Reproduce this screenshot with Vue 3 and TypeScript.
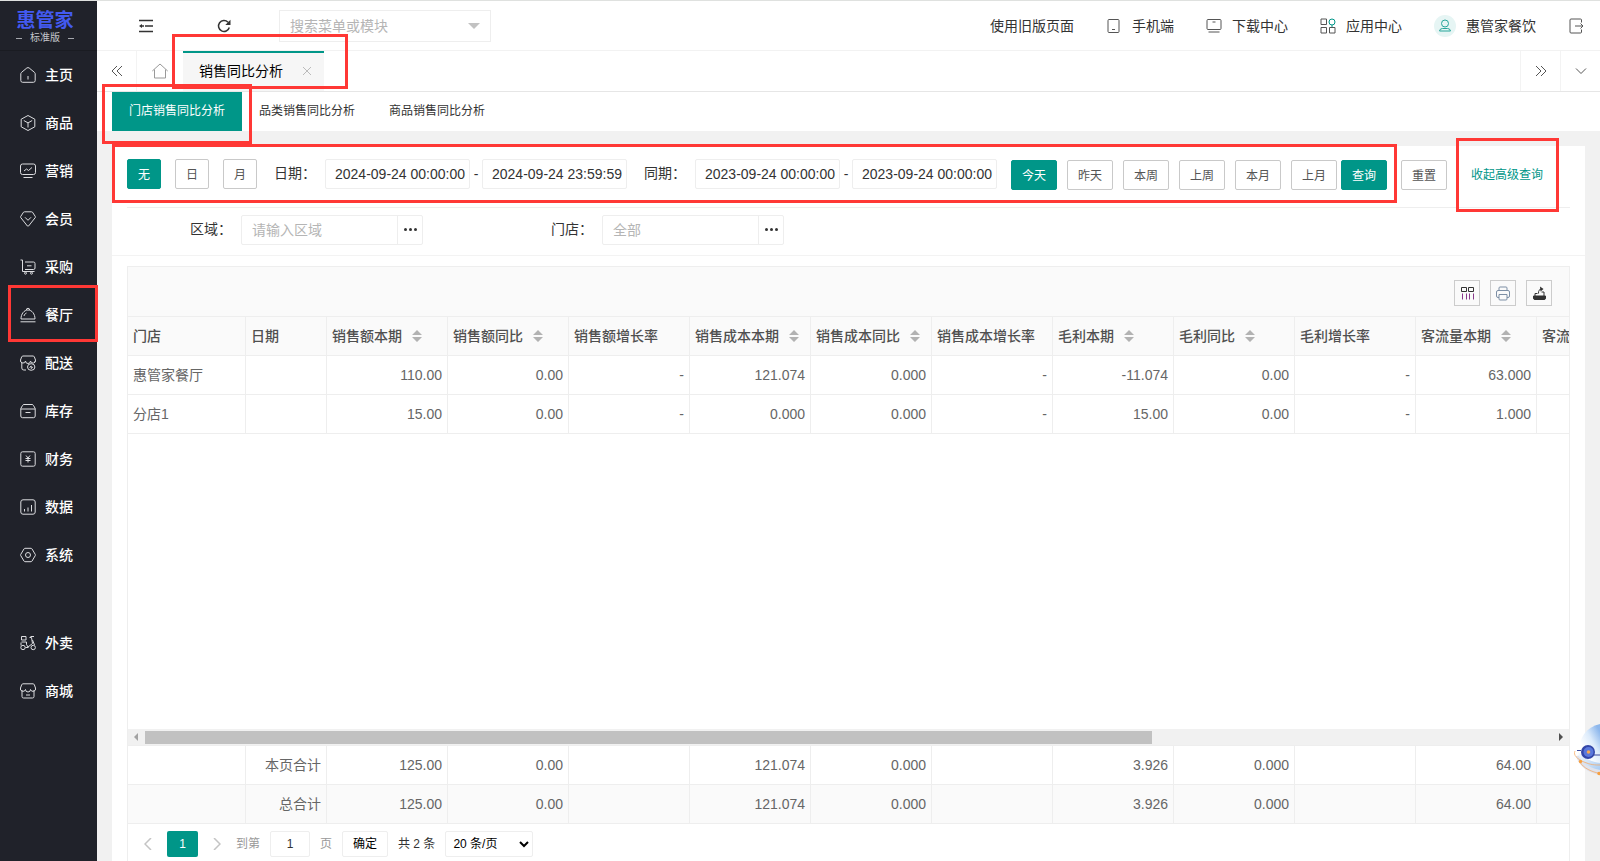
<script setup lang="ts">
import { ref } from 'vue'

interface MenuItem {
  label: string
  icon: string
  marked?: boolean
}

interface Column {
  label: string
  sortable?: boolean
}

const shop = 'M2 7v6.500a1.500 1.500 0 0 0 1.500 1.500h9a1.500 1.500 0 0 0 1.500-1.500V7M3 .800h10a1.500 1.500 0 0 1 1.300.900L15.500 5a2.500 2.500 0 0 1-5 1.500 2.500 2.500 0 0 1-5 0A2.500 2.500 0 0 1 .500 5l1.200-3.300A1.500 1.500 0 0 1 3 .800zM6 12h4'

const menu: MenuItem[] = [
  { label: '主页', icon: 'M.800 6.800Q.800 6 1.500 5.400L6.800 1Q8 .200 9.200 1l5.300 4.400q.700.600.700 1.400V13.500a1.800 1.800 0 0 1-1.800 1.800H2.600A1.800 1.800 0 0 1 .800 13.500zM8 9v3.500' },
  { label: '商品', icon: 'M8 .500 14.800 4.200v7.600L8 15.500 1.200 11.800V4.200zM3.800 5.500 8 7.900l4.200-2.400M8 7.900v4.600' },
  { label: '营销', icon: 'M2.500 1h11a2 2 0 0 1 2 2v6.500a2 2 0 0 1-2 2h-11a2 2 0 0 1-2-2V3a2 2 0 0 1 2-2zM4 8l2.500-2 2 1.500L12 4.500M3.500 14.500h9' },
  { label: '会员', icon: 'M3.500 1.200Q4 .800 4.500.800h7q.500 0 1 .400L15.300 5.500q.200.500 0 1L8.600 15q-.600.500-1.200 0L.700 6.500q-.200-.500 0-1zM5 6.300 8 9.300l3-3' },
  { label: '采购', icon: 'M.500 1H2.500V12.500h12M5 3h8.500a1.500 1.500 0 0 1 1.500 1.500V9a1.500 1.500 0 0 1-1.500 1.500H5M7 6.800h4.500M4.500 14.200a1 1 0 1 0 2 0 1 1 0 1 0-2 0M10.500 14.200a1 1 0 1 0 2 0 1 1 0 1 0-2 0' },
  { label: '餐厅', icon: 'M1 12C1 7 4 3 8 3s7 4 7 9zM6.300 3a1.700 1.700 0 0 1 3.400 0M4 9C4.300 7.500 5.300 6.500 6.500 6M.500 14.800h15', marked: true },
  { label: '配送', icon: 'M1.800 7v6a2 2 0 0 0 2 2H6M14.500 8V6.500M3 1h10a1.500 1.500 0 0 1 1.300.800L15.500 5a2.500 2.500 0 0 1-5 1 2.500 2.500 0 0 1-5 0A2.500 2.500 0 0 1 .500 5l1.200-3.200A1.500 1.500 0 0 1 3 1zM7.500 12a3.700 3.300 0 1 0 7.400 0 3.700 3.300 0 1 0-7.400 0M9.500 12.500l1.700-1.500v2.500l1.700-1.500' },
  { label: '库存', icon: 'M.800 5.500 2.500 2.500Q3 1.500 4 1.500h8q1 0 1.500 1l1.700 3V13a1.700 1.700 0 0 1-1.700 1.700h-11A1.700 1.700 0 0 1 .800 13zM.800 6h14.400M5.500 9.500h5' },
  { label: '财务', icon: 'M2.500.800h11A1.700 1.700 0 0 1 15.200 2.500v11a1.700 1.700 0 0 1-1.700 1.700h-11A1.700 1.700 0 0 1 .800 13.500v-11A1.700 1.700 0 0 1 2.500.800zM6 4.500l2 2.500 2-2.500M5.500 7.500h5M5.500 9.500h5M8 7v4.500' },
  { label: '数据', icon: 'M3 .800h10A2.200 2.200 0 0 1 15.200 3v10a2.200 2.200 0 0 1-2.200 2.200H3A2.200 2.200 0 0 1 .800 13V3A2.200 2.200 0 0 1 3 .800zM4.500 10v2.500M8 8.500v4M11.500 6v6.500' },
  { label: '系统', icon: 'M5 1.300h6q.600 0 1 .600L15.300 7.500q.200.500 0 1L12 14.100q-.400.600-1 .600H5q-.600 0-1-.600L.700 8.500q-.200-.500 0-1L4 1.900q.400-.600 1-.600zM5.500 8a2.500 2.500 0 1 0 5 0 2.500 2.500 0 1 0-5 0' },
]

const extraMenu: MenuItem[] = [
  { label: '外卖', icon: 'M1.500 1.500h4.500v3.500H1.500zM1.500 7h5v2.500M6.500 9.500 8 12l4.500-3.500-1-6H9.500M10.500 1.500h3.500M12.500 5 14.500 10M1 7.500v3M.800 12.500a2.200 2.200 0 1 0 4.400 0 2.200 2.200 0 1 0-4.400 0M11 12.500a2.200 2.200 0 1 0 4.400 0 2.200 2.200 0 1 0-4.400 0M5.500 12.500h3' },
  { label: '商城', icon: shop },
]

const topLinks = [
  { label: '手机端', icon: 'M3 1.500h9a1 1 0 0 1 1 1v11a1 1 0 0 1-1 1H3a1 1 0 0 1-1-1v-11a1 1 0 0 1 1-1zM6 11.500h3' },
  { label: '下载中心', icon: 'M2 1.500h12a1 1 0 0 1 1 1v8a1 1 0 0 1-1 1H2a1 1 0 0 1-1-1v-8a1 1 0 0 1 1-1zM6.500 4h3M2.500 14h11' },
]

const pageTabs = ['门店销售同比分析', '品类销售同比分析', '商品销售同比分析']
const activePage = ref(0)

const groupings = ['无', '日', '月']
const grouping = ref('无')
const ranges = ['今天', '昨天', '本周', '上周', '本月', '上月']
const range = ref('今天')

const currentFrom = ref('2024-09-24 00:00:00')
const currentTo = ref('2024-09-24 23:59:59')
const previousFrom = ref('2023-09-24 00:00:00')
const previousTo = ref('2023-09-24 00:00:00')
const pageNumber = ref('1')

const columns: Column[] = [
  { label: '门店' },
  { label: '日期' },
  { label: '销售额本期', sortable: true },
  { label: '销售额同比', sortable: true },
  { label: '销售额增长率' },
  { label: '销售成本本期', sortable: true },
  { label: '销售成本同比', sortable: true },
  { label: '销售成本增长率' },
  { label: '毛利本期', sortable: true },
  { label: '毛利同比', sortable: true },
  { label: '毛利增长率' },
  { label: '客流量本期', sortable: true },
  { label: '客流量同比', sortable: true },
]

const rows: string[][] = [
  ['惠管家餐厅', '', '110.00', '0.00', '-', '121.074', '0.000', '-', '-11.074', '0.00', '-', '63.000', ''],
  ['分店1', '', '15.00', '0.00', '-', '0.000', '0.000', '-', '15.00', '0.00', '-', '1.000', ''],
]

const totals: string[][] = [
  ['', '本页合计', '125.00', '0.00', '', '121.074', '0.000', '', '3.926', '0.000', '', '64.00', ''],
  ['', '总合计', '125.00', '0.00', '', '121.074', '0.000', '', '3.926', '0.000', '', '64.00', ''],
]
</script>

<template>
  <div class="app">
    <aside class="side">
      <div class="logo">
        <strong>惠管家</strong>
        <span class="edition">标准版</span>
      </div>
      <nav class="menu">
        <a v-for="item in menu" :key="item.label" href="#" class="menu-item" :class="{ marked: item.marked }">
          <svg class="line-icon" viewBox="0 0 16 16"><path :d="item.icon" /></svg>
          <span>{{ item.label }}</span>
        </a>
      </nav>
      <nav class="menu extra">
        <a v-for="item in extraMenu" :key="item.label" href="#" class="menu-item">
          <svg class="line-icon" viewBox="0 0 16 16"><path :d="item.icon" /></svg>
          <span>{{ item.label }}</span>
        </a>
      </nav>
    </aside>

    <div class="main">
      <header class="top">
        <div class="top-left">
          <button class="icon-btn" aria-label="折叠菜单">
            <svg class="dark-icon" viewBox="0 0 14 14"><path d="M0 1.500h14M6 7h8M0 12.500h14" /><path class="solid" d="M0 7l3-2v4z" /><path d="M2 7h3" /></svg>
          </button>
          <button class="icon-btn" aria-label="刷新">
            <svg class="dark-icon" viewBox="0 0 14 14"><path d="M12.300 8.500A5.500 5.500 0 1 1 11 3.200" /><path class="solid" d="M13.500.800V6H8.300z" /></svg>
          </button>
          <div class="search">
            <input type="text" placeholder="搜索菜单或模块" aria-label="搜索菜单或模块" />
            <svg viewBox="0 0 12 6"><path d="M0 0h12L6 6z" /></svg>
          </div>
        </div>
        <div class="top-right">
          <a href="#">使用旧版页面</a>
          <a v-for="link in topLinks" :key="link.label" href="#">
            <svg class="thin-icon" viewBox="0 0 16 16"><path :d="link.icon" /></svg>{{ link.label }}
          </a>
          <a href="#">
            <svg class="thin-icon" viewBox="0 0 16 16">
              <path d="M1 1h5.500v5.500H1zM1 9.500h5.500V15H1zM9.500 9.500H15V15H9.500z" />
              <path class="teal" d="M9 4a3 3 0 1 0 6 0 3 3 0 1 0-6 0M12 7v2" />
            </svg>应用中心
          </a>
          <a href="#">
            <svg class="avatar" viewBox="0 0 22 22"><circle class="halo" cx="11" cy="11" r="11" /><circle cx="11" cy="8.500" r="3.500" /><path d="M5.500 16a3 3 0 0 1 3-2.500h5a3 3 0 0 1 3 2.500z" /></svg>惠管家餐饮
          </a>
          <a href="#" aria-label="退出">
            <svg class="thin-icon" viewBox="0 0 16 16"><path d="M13.500 4.500V2a1 1 0 0 0-1-1H3a1 1 0 0 0-1 1v12a1 1 0 0 0 1 1h9.500a1 1 0 0 0 1-1v-2.500M7 8h8M12.500 5.500 15 8l-2.500 2.500" /></svg>
          </a>
        </div>
      </header>

      <div class="tabs">
        <button class="tab-ctl" aria-label="向左">
          <svg class="thin-icon" viewBox="0 0 16 16"><path d="M8 3 3 8l5 5M13 3 8 8l5 5" /></svg>
        </button>
        <button class="tab-home" aria-label="首页">
          <svg class="pale-icon" viewBox="0 0 16 16"><path d="M.300 8 8 1l7.700 7M2.500 6.500v8.500h11V6.500" /></svg>
        </button>
        <div class="tab-active">
          <a href="#">销售同比分析</a>
          <button aria-label="关闭"><svg viewBox="0 0 8 8"><path d="M0 0l8 8M8 0 0 8" /></svg></button>
          <i class="mark mark-tab"></i>
        </div>
        <span class="grow"></span>
        <button class="tab-ctl end" aria-label="向右">
          <svg class="thin-icon" viewBox="0 0 16 16"><path d="M3 3 8 8l-5 5M8 3 13 8l-5 5" /></svg>
        </button>
        <button class="tab-ctl end" aria-label="更多">
          <svg class="thin-icon" viewBox="0 0 16 16"><path d="M3 5.500 8 10.500l5-5" /></svg>
        </button>
      </div>

      <div class="pages">
        <button v-for="(tab, i) in pageTabs" :key="tab" class="page-tab" :class="{ on: i === activePage }" @click="activePage = i">
          {{ tab }}
        </button>
        <i class="mark mark-page"></i>
      </div>

      <section class="card">
        <form class="filters" @submit.prevent>
          <div class="line primary">
            <div class="group wide">
              <button v-for="g in groupings" :key="g" type="button" class="btn small" :class="{ on: g === grouping }" @click="grouping = g">{{ g }}</button>
            </div>
            <label for="current-from" class="cap first">日期：</label>
            <input id="current-from" v-model="currentFrom" class="date" type="text" />
            <span class="dash">-</span>
            <input v-model="currentTo" class="date" type="text" aria-label="结束日期" />
            <label for="previous-from" class="cap">同期：</label>
            <input id="previous-from" v-model="previousFrom" class="date" type="text" />
            <span class="dash">-</span>
            <input v-model="previousTo" class="date" type="text" aria-label="同期结束日期" />
            <div class="actions">
              <div class="group">
                <button v-for="r in ranges" :key="r" type="button" class="btn" :class="{ on: r === range }" @click="range = r">{{ r }}</button>
              </div>
              <button type="submit" class="btn on query">查询</button>
              <button type="reset" class="btn reset">重置</button>
              <a href="#" class="collapse">收起高级查询<i class="mark mark-link"></i></a>
            </div>
            <i class="mark mark-filters"></i>
          </div>
          <div class="line advanced">
            <div class="field">
              <label for="area">区域：</label>
              <div class="picker"><input id="area" type="text" placeholder="请输入区域" /><button type="button" aria-label="选择区域"><b></b><b></b><b></b></button></div>
            </div>
            <div class="field">
              <label for="store">门店：</label>
              <div class="picker"><input id="store" type="text" placeholder="全部" /><button type="button" aria-label="选择门店"><b></b><b></b><b></b></button></div>
            </div>
          </div>
        </form>

        <div class="grid">
          <div class="tools">
            <button aria-label="筛选列">
              <svg viewBox="0 0 16 16"><path d="M2.500 2.500h5v4h-5zM9.500 2.500h5v4h-5z" stroke="#333" /><path d="M3.500 8.500v6M7.500 8.500v6M10.500 8.500v6M14.500 8.500v6" stroke="#8a3a8c" /></svg>
            </button>
            <button aria-label="打印">
              <svg viewBox="0 0 16 16"><path d="M4 5.500V3a1 1 0 0 1 1-1h6a1 1 0 0 1 1 1v2.500M4 12.500H3A1.500 1.500 0 0 1 1.500 11V7A1.500 1.500 0 0 1 3 5.500h10A1.500 1.500 0 0 1 14.500 7v4a1.500 1.500 0 0 1-1.500 1.500h-1M4 9.500h8V14a1 1 0 0 1-1 1H5a1 1 0 0 1-1-1z" stroke="#7d8fa5" /></svg>
            </button>
            <button aria-label="导出">
              <svg viewBox="0 0 16 16"><path d="M2.500 11h12v2a1.500 1.500 0 0 1-1.500 1.500H4A1.500 1.500 0 0 1 2.500 13z" fill="#333" stroke="#333" /><path d="M4 11V8.500h2.500M13 11V7h-2.500M7.500 8.500C7.500 5.500 8 4.500 10.500 4" stroke="#333" /><path d="M9 1.500 12.500 4 9.500 6.500z" fill="#333" /></svg>
            </button>
          </div>

          <div class="clip">
            <table>
              <colgroup><col v-for="(c, i) in columns" :key="c.label" :class="'col-' + Math.min(i, 2)" /></colgroup>
              <thead>
                <tr>
                  <th v-for="c in columns" :key="c.label" scope="col">
                    <span>{{ c.label }}</span>
                    <svg v-if="c.sortable" class="sort" viewBox="0 0 10 12"><path d="M0 5h10L5 0zM0 7h10l-5 5z" /></svg>
                  </th>
                </tr>
              </thead>
              <tbody>
                <tr v-for="row in rows" :key="row[0]">
                  <td v-for="(cell, i) in row" :key="i" :class="{ num: i > 1 }">{{ cell }}</td>
                </tr>
              </tbody>
            </table>
          </div>

          <div class="scroll">
            <svg viewBox="0 0 4 8"><path d="M4 0v8L0 4z" fill="#a3a3a3" /></svg>
            <div class="track"><div class="thumb"></div></div>
            <svg viewBox="0 0 4 8"><path d="M0 0v8l4-4z" fill="#505050" /></svg>
          </div>

          <div class="totals">
            <table>
              <colgroup><col v-for="(c, i) in columns" :key="c.label" :class="'col-' + Math.min(i, 2)" /></colgroup>
              <tbody>
                <tr v-for="row in totals" :key="row[1]">
                  <td v-for="(cell, i) in row" :key="i" class="num">{{ cell }}</td>
                </tr>
              </tbody>
            </table>
          </div>

          <div class="pager">
            <button class="step" aria-label="上一页"><svg viewBox="0 0 8 12"><path d="M7 0 1 6l6 6" /></svg></button>
            <button class="current">1</button>
            <button class="step" aria-label="下一页"><svg viewBox="0 0 8 12"><path d="M1 0l6 6-6 6" /></svg></button>
            <label for="page-no">到第</label>
            <input id="page-no" v-model="pageNumber" type="text" />
            <span class="unit">页</span>
            <button class="go">确定</button>
            <span class="count">共 2 条</span>
            <select aria-label="每页条数">
              <option>20 条/页</option>
              <option>50 条/页</option>
            </select>
          </div>
        </div>
      </section>
    </div>

    <svg class="robot" viewBox="0 0 28 54" aria-hidden="true">
      <defs>
        <linearGradient id="shell" x1="0.8" y1="0" x2="0.2" y2="0.6">
          <stop offset="0" stop-color="#8db7ec" />
          <stop offset="0.5" stop-color="#dcebfb" />
          <stop offset="1" stop-color="#ffffff" />
        </linearGradient>
        <linearGradient id="base" x1="0" y1="0" x2="1" y2="1">
          <stop offset="0" stop-color="#ffffff" />
          <stop offset="1" stop-color="#a9ccf3" />
        </linearGradient>
      </defs>
      <path d="M4 34C7 44 16 51 28 53V30z" fill="#dfe3ee" />
      <path d="M6 30c1 9 10 16 22 18V26z" fill="url(#base)" />
      <path d="M28 2C14 5 7 16 6.500 30 12 36 20 40 28 41z" fill="url(#shell)" />
      <path d="M5 28.500h4M22 33h6" stroke="#3c4a9c" fill="none" />
      <circle cx="16" cy="30" r="7" fill="#3346a8" />
      <circle cx="16.500" cy="30" r="5" fill="#5a78dc" />
      <circle cx="16.500" cy="30" r="1.800" fill="#f7a752" />
      <path d="M3 29c-2 4 2 8 9 11s11 3 16 3M8 40c3 6 12 10 20 11.500" stroke="#f7a55a" stroke-width=".700" fill="none" />
      <circle cx="8.500" cy="39.500" r="1.700" fill="#f7a040" />
      <circle cx="27" cy="51.500" r="1.700" fill="#f7a040" />
    </svg>
  </div>
</template>

<style>
html,
body {
  margin: 0;
}
</style>

<style scoped>
.app {
  display: flex;
  height: 100vh;
  box-sizing: border-box;
  border-top: 1px solid #dfe1df;
  overflow: hidden;
  position: relative;
  background: #f1f1f1;
  color: #333;
  font: 14px/20px "Liberation Sans", "Noto Sans CJK SC", sans-serif;
}
.app *,
.app *::before {
  box-sizing: border-box;
}
a {
  color: inherit;
  text-decoration: none;
}
button,
input,
select {
  font: inherit;
  color: inherit;
  margin: 0;
  padding: 0;
  border: 0;
  border-radius: 0;
  background: none;
  outline: 0;
}
input::placeholder {
  color: #b5b5b5;
  opacity: 1;
}
svg {
  display: block;
  flex: none;
}
.mark {
  position: absolute;
  border: 3px solid #ff3835;
  z-index: 5;
  pointer-events: none;
}

/* sidebar */
.side {
  flex: none;
  width: 97px;
  background: #20222a;
  color: #fff;
}
.logo {
  height: 50px;
  padding: 9px 7px 0 0;
  display: flex;
  flex-direction: column;
  align-items: center;
  border-bottom: 1px solid #1a1c22;
}
.logo strong {
  font-size: 19px;
  line-height: 22px;
  color: #435af0;
}
.edition {
  display: flex;
  align-items: center;
  gap: 8px;
  font-size: 10px;
  line-height: 12px;
  color: #c4c6cb;
}
.edition::before,
.edition::after {
  content: "";
  width: 6px;
  height: 1px;
  background: #a5a7ad;
}
.extra {
  margin-top: 40px;
}
.menu-item {
  position: relative;
  display: flex;
  align-items: center;
  gap: 9px;
  height: 48px;
  padding-left: 20px;
  font-weight: 500;
}
.menu-item.marked::after {
  content: "";
  position: absolute;
  inset: -6px -1px -3px 8px;
  border: 3px solid #ff3835;
  z-index: 5;
}
.line-icon {
  width: 16px;
  height: 16px;
  fill: none;
  stroke: #dcdde0;
  overflow: visible;
}

/* header */
.main {
  flex: 1;
  min-width: 0;
  display: flex;
  flex-direction: column;
}
.top {
  flex: none;
  height: 50px;
  display: flex;
  justify-content: space-between;
  background: #fff;
  border-bottom: 1px solid #f2f2f2;
}
.top-left,
.top-right {
  display: flex;
  align-items: center;
}
.icon-btn {
  width: 48px;
  height: 49px;
  display: grid;
  place-items: center;
}
.top-left {
  padding-left: 25px;
}
.icon-btn + .icon-btn {
  margin-left: 30px;
}
.dark-icon {
  width: 14px;
  height: 14px;
  fill: none;
  stroke: #333;
  stroke-width: 1.500;
}
.solid {
  fill: #333;
  stroke: none;
}
.search {
  display: flex;
  align-items: center;
  width: 212px;
  height: 32px;
  margin-left: 31px;
  padding: 0 10px;
  border: 1px solid #eee;
}
.search input {
  flex: 1;
  min-width: 0;
}
.search svg {
  width: 12px;
  height: 6px;
  fill: #c2c2c2;
}
.top-right {
  gap: 32px;
  padding-right: 16px;
}
.top-right a {
  display: flex;
  align-items: center;
  gap: 10px;
}
.thin-icon,
.pale-icon {
  width: 16px;
  height: 16px;
  fill: none;
  stroke: #555;
}
.pale-icon {
  stroke: #999;
}
.teal {
  stroke: #009688;
}
.avatar {
  width: 22px;
  height: 22px;
  fill: none;
  stroke: #26a69a;
}
.avatar .halo {
  fill: #e6f5f4;
  stroke: none;
}

/* open tabs */
.tabs {
  flex: none;
  display: flex;
  height: 40px;
  background: #fff;
}
.tab-ctl {
  width: 40px;
  display: grid;
  place-items: center;
  border-right: 1px solid #f3f3f3;
}
.tab-ctl.end {
  border-right: 0;
  border-left: 1px solid #f3f3f3;
}
.tab-home {
  width: 46px;
  display: grid;
  place-items: center;
}
.tab-active {
  position: relative;
  display: flex;
  align-items: center;
  justify-content: space-between;
  width: 141px;
  padding: 0 13px 2px 16px;
  background: #f6f6f6;
  border-top: 2px solid #009688;
  color: #000;
}
.tab-active svg {
  width: 8px;
  height: 8px;
  stroke: #bbb;
}
.mark-tab {
  inset: -19px -24px 2px -11px;
}
.grow {
  flex: 1;
}
.pages {
  position: relative;
  flex: none;
  display: flex;
  height: 40px;
  margin: 0 0 15px;
  padding-left: 15px;
  background: #fff;
  border-top: 1px solid #e6e6e6;
}
.page-tab {
  height: 39px;
  padding: 0 17px 2px;
  font-size: 12px;
}
.page-tab.on {
  background: #009688;
  color: #fff;
}
.mark-page {
  left: 5px;
  top: -8px;
  width: 150px;
  height: 60px;
}

/* filters */
.card {
  flex: 1;
  min-height: 0;
  display: flex;
  flex-direction: column;
  margin: 0 15px;
  background: #fff;
}
.filters {
  flex: none;
  border-bottom: 1px solid #f3f3f3;
}
.line {
  display: flex;
  align-items: center;
}
.primary {
  position: relative;
  height: 62px;
  padding: 0 0 6px 15px;
  white-space: nowrap;
}
.primary::before {
  content: "";
  position: absolute;
  left: 15px;
  right: 15px;
  bottom: 0;
  height: 1px;
  background: #eee;
}
.group {
  display: flex;
  gap: 10px;
}
.group.wide {
  gap: 14px;
}
.btn {
  flex: none;
  width: 46px;
  height: 30px;
  padding-top: 1px;
  border: 1px solid #c9c9c9;
  border-radius: 2px;
  font-size: 12px;
  line-height: 26px;
  color: #555;
  background: #fff;
}
.btn.small {
  width: 34px;
}
.btn.on {
  border-color: #009688;
  background: #009688;
  color: #fff;
}
.cap {
  width: 51px;
  margin-left: 17px;
  padding-bottom: 2px;
}
.date {
  flex: none;
  width: 145px;
  height: 30px;
  padding-left: 9px;
  border: 1px solid #eee;
  border-radius: 2px;
}
.dash {
  width: 12px;
  text-align: center;
}
.actions {
  display: flex;
  align-items: center;
  margin-left: 14px;
  padding-top: 2px;
}
.query {
  margin-left: 4px;
}
.reset {
  margin-left: 14px;
}
.collapse {
  position: relative;
  margin-left: 24px;
  font-size: 12px;
  color: #009688;
}
.mark-link {
  inset: -27px -16px -27px -15px;
}
.mark-filters {
  left: 0;
  top: -2px;
  width: 1285px;
  height: 59px;
}
.advanced {
  height: 47px;
  padding: 0 0 4px 78px;
  gap: 128px;
}
.field {
  display: flex;
  align-items: center;
}
.field label {
  width: 51px;
  padding-bottom: 2px;
}
.picker {
  display: flex;
  width: 182px;
  height: 30px;
  border: 1px solid #eee;
  border-radius: 2px;
}
.picker input {
  flex: 1;
  min-width: 0;
  padding-left: 10px;
}
.picker button {
  width: 25px;
  display: flex;
  align-items: center;
  justify-content: center;
  gap: 2px;
  border-left: 1px solid #eee;
}
.picker b {
  width: 3px;
  height: 3px;
  border-radius: 50%;
  background: #333;
}

/* data grid */
.grid {
  flex: 1;
  min-height: 0;
  display: flex;
  flex-direction: column;
  margin: 10px 15px 0;
  border: 1px solid #eee;
  border-bottom: 0;
  color: #666;
}
.tools {
  flex: none;
  height: 50px;
  display: flex;
  justify-content: flex-end;
  align-items: center;
  gap: 10px;
  padding: 2px 17px 0 0;
  background: #fafafa;
  border-bottom: 1px solid #eee;
}
.tools button {
  width: 26px;
  height: 26px;
  display: grid;
  place-items: center;
  border: 1px solid #ccc;
}
.tools svg {
  width: 16px;
  height: 16px;
  fill: none;
}
.clip {
  flex: 1;
  min-height: 0;
  overflow: hidden;
}
.totals {
  flex: none;
  overflow: hidden;
  border-top: 1px solid #eee;
}
table {
  table-layout: fixed;
  width: 1530px;
  border-collapse: separate;
  border-spacing: 0;
}
.col-0 {
  width: 118px;
}
.col-1 {
  width: 81px;
}
.col-2 {
  width: 121px;
}
th,
td {
  height: 39px;
  padding: 0 5px;
  border-right: 1px solid #eee;
  border-bottom: 1px solid #eee;
  text-align: left;
  white-space: nowrap;
  overflow: hidden;
}
th {
  padding-bottom: 2px;
  background: #fafafa;
  font-weight: 500;
  color: #505050;
}
th span {
  display: inline-block;
  vertical-align: middle;
}
.sort {
  display: inline-block;
  vertical-align: middle;
  width: 10px;
  height: 12px;
  margin-left: 10px;
  fill: #b2b2b2;
}
.num {
  text-align: right;
}
.totals tr:last-child td {
  background: #fafafa;
}
.scroll {
  flex: none;
  display: flex;
  align-items: center;
  height: 16px;
  padding: 0 6px;
  gap: 7px;
  background: #f1f1f1;
}
.scroll svg {
  width: 4px;
  height: 8px;
}
.track {
  flex: 1;
}
.thumb {
  width: 71.6%;
  height: 13px;
  background: #c1c1c1;
}

/* pagination */
.pager {
  flex: none;
  display: flex;
  align-items: center;
  height: 37px;
  padding: 3px 0 0 9px;
  font-size: 12px;
}
.pager svg {
  width: 8px;
  height: 12px;
  fill: none;
  stroke: #c4c4c4;
  stroke-width: 1.500;
}
.step {
  width: 22px;
  height: 26px;
  display: grid;
  place-items: center;
}
.current {
  width: 31px;
  height: 26px;
  margin: 0 8px;
  border-radius: 2px;
  background: #009688;
  color: #fff;
}
.pager label {
  margin-left: 8px;
  color: #999;
}
.pager input {
  width: 40px;
  height: 26px;
  margin: 0 10px;
  border: 1px solid #eee;
  border-radius: 2px;
  text-align: center;
  color: #333;
}
.unit {
  color: #999;
}
.go {
  width: 46px;
  height: 26px;
  margin: 0 10px;
  border: 1px solid #eee;
  border-radius: 2px;
  color: #000;
}
.count {
  color: #333;
}
.pager select {
  width: 88px;
  height: 26px;
  margin-left: 10px;
  padding-left: 3px;
  border: 1px solid #eee;
  border-radius: 2px;
  color: #000;
}

.robot {
  position: absolute;
  right: 0;
  top: 721px;
  width: 28px;
  height: 54px;
}
</style>
